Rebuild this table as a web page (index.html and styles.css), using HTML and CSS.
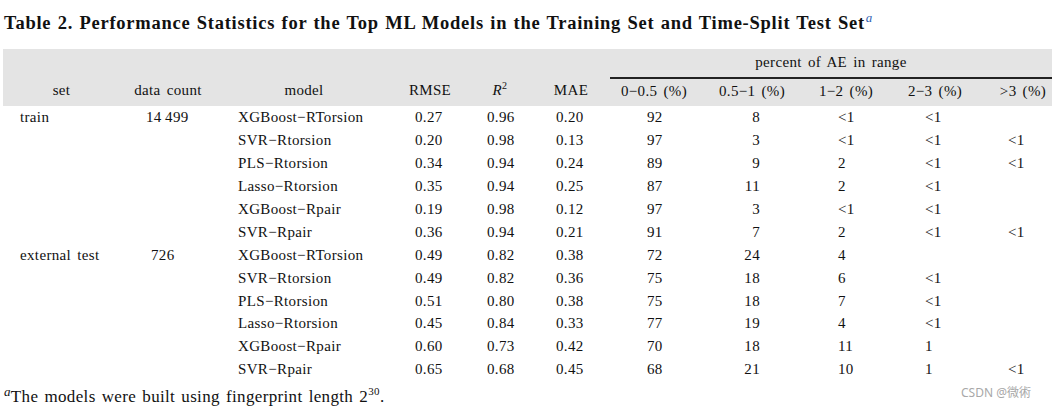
FILE: index.html
```html
<!DOCTYPE html>
<html>
<head>
<meta charset="utf-8">
<link rel="stylesheet" href="styles.css">
</head>
<body>
<div class="page">
  <h1 class="title">Table 2. Performance Statistics for the Top ML Models in the Training Set and Time-Split Test Set<sup class="fn-mark">a</sup></h1>
  <table class="stats">
    <colgroup>
      <col class="c-set"><col class="c-count"><col class="c-model"><col class="c-rmse"><col class="c-r2"><col class="c-mae"><col class="c-p1"><col class="c-p2"><col class="c-p3"><col class="c-p4"><col class="c-p5">
    </colgroup>
    <thead>
      <tr class="group-row">
        <th colspan="6"></th>
        <th colspan="5" class="group"><span>percent of AE in range</span></th>
      </tr>
      <tr class="head-row">
        <th>set</th><th>data count</th><th>model</th><th>RMSE</th><th><i>R</i><sup>2</sup></th><th>MAE</th>
        <th>0−0.5 (%)</th><th>0.5−1 (%)</th><th>1−2 (%)</th><th>2−3 (%)</th><th class="last">&gt;3 (%)</th>
      </tr>
    </thead>
    <tbody>
      <tr><td class="set">train</td><td class="count">14&#8201;499</td><td class="model">XGBoost−RTorsion</td><td class="rmse">0.27</td><td class="r2">0.96</td><td class="mae">0.20</td><td class="p1">92</td><td class="p2">8</td><td class="p3">&lt;1</td><td class="p4">&lt;1</td><td class="p5"></td></tr>
      <tr><td></td><td></td><td class="model">SVR−Rtorsion</td><td class="rmse">0.20</td><td class="r2">0.98</td><td class="mae">0.13</td><td class="p1">97</td><td class="p2">3</td><td class="p3">&lt;1</td><td class="p4">&lt;1</td><td class="p5">&lt;1</td></tr>
      <tr><td></td><td></td><td class="model">PLS−Rtorsion</td><td class="rmse">0.34</td><td class="r2">0.94</td><td class="mae">0.24</td><td class="p1">89</td><td class="p2">9</td><td class="p3">2</td><td class="p4">&lt;1</td><td class="p5">&lt;1</td></tr>
      <tr><td></td><td></td><td class="model">Lasso−Rtorsion</td><td class="rmse">0.35</td><td class="r2">0.94</td><td class="mae">0.25</td><td class="p1">87</td><td class="p2">11</td><td class="p3">2</td><td class="p4">&lt;1</td><td class="p5"></td></tr>
      <tr><td></td><td></td><td class="model">XGBoost−Rpair</td><td class="rmse">0.19</td><td class="r2">0.98</td><td class="mae">0.12</td><td class="p1">97</td><td class="p2">3</td><td class="p3">&lt;1</td><td class="p4">&lt;1</td><td class="p5"></td></tr>
      <tr><td></td><td></td><td class="model">SVR−Rpair</td><td class="rmse">0.36</td><td class="r2">0.94</td><td class="mae">0.21</td><td class="p1">91</td><td class="p2">7</td><td class="p3">2</td><td class="p4">&lt;1</td><td class="p5">&lt;1</td></tr>
      <tr><td class="set">external test</td><td class="count c2">726</td><td class="model">XGBoost−RTorsion</td><td class="rmse">0.49</td><td class="r2">0.82</td><td class="mae">0.38</td><td class="p1">72</td><td class="p2">24</td><td class="p3">4</td><td class="p4"></td><td class="p5"></td></tr>
      <tr><td></td><td></td><td class="model">SVR−Rtorsion</td><td class="rmse">0.49</td><td class="r2">0.82</td><td class="mae">0.36</td><td class="p1">75</td><td class="p2">18</td><td class="p3">6</td><td class="p4">&lt;1</td><td class="p5"></td></tr>
      <tr><td></td><td></td><td class="model">PLS−Rtorsion</td><td class="rmse">0.51</td><td class="r2">0.80</td><td class="mae">0.38</td><td class="p1">75</td><td class="p2">18</td><td class="p3">7</td><td class="p4">&lt;1</td><td class="p5"></td></tr>
      <tr><td></td><td></td><td class="model">Lasso−Rtorsion</td><td class="rmse">0.45</td><td class="r2">0.84</td><td class="mae">0.33</td><td class="p1">77</td><td class="p2">19</td><td class="p3">4</td><td class="p4">&lt;1</td><td class="p5"></td></tr>
      <tr><td></td><td></td><td class="model">XGBoost−Rpair</td><td class="rmse">0.60</td><td class="r2">0.73</td><td class="mae">0.42</td><td class="p1">70</td><td class="p2">18</td><td class="p3">11</td><td class="p4">1</td><td class="p5"></td></tr>
      <tr><td></td><td></td><td class="model">SVR−Rpair</td><td class="rmse">0.65</td><td class="r2">0.68</td><td class="mae">0.45</td><td class="p1">68</td><td class="p2">21</td><td class="p3">10</td><td class="p4">1</td><td class="p5">&lt;1</td></tr>
    </tbody>
  </table>
  <p class="footnote"><sup class="fn-a">a</sup>The models were built using fingerprint length 2<sup class="exp">30</sup>.</p>
  <div class="watermark">CSDN @微術</div>
</div>
</body>
</html>
```

FILE: styles.css
```css
html, body {
  margin: 0;
  padding: 0;
  background: #ffffff;
  overflow: hidden;
}

.page {
  position: relative;
  width: 1052px;
  height: 407px;
  font-family: "Liberation Serif", "Times New Roman", serif;
  color: #111111;
  padding-left: 3px;
  box-sizing: border-box;
}

.title {
  margin: 0;
  padding: 13px 0 0 1px;
  height: 36px;
  box-sizing: border-box;
  font-size: 18.5px;
  font-weight: bold;
  line-height: 20px;
  letter-spacing: 0.75px;
  word-spacing: 1px;
  white-space: nowrap;
}

.fn-mark {
  color: #2f5fb3;
  font-style: italic;
  font-weight: normal;
  font-size: 13px;
  line-height: 0;
  vertical-align: 7px;
  margin-left: 1px;
}

.stats {
  border-collapse: collapse;
  table-layout: fixed;
  width: 1049px;
  font-size: 15px;
  letter-spacing: 0.35px;
  word-spacing: 2px;
  margin-top: 13px;
}

.c-set { width: 117px; }
.c-count { width: 96px; }
.c-model { width: 176px; }
.c-rmse { width: 76px; }
.c-r2 { width: 64px; }
.c-mae { width: 78px; }
.c-p1 { width: 88px; }
.c-p2 { width: 108px; }
.c-p3 { width: 80px; }
.c-p4 { width: 98px; }
.c-p5 { width: 68px; }

thead tr { background: #e4e4e4; }

th {
  font-weight: normal;
  text-align: center;
  padding: 0;
  white-space: nowrap;
}

.group-row th {
  height: 28px;
  vertical-align: top;
}

.group {
  border-bottom: 2px solid #222222;
}

.group span {
  display: block;
  padding-top: 4px;
  line-height: 18px;
}

.head-row th {
  height: 23px;
  line-height: 18px;
  padding: 0 0 4px 0;
  vertical-align: middle;
}

.head-row th.last { padding-left: 10px; }

.head-row sup {
  font-size: 10px;
  line-height: 0;
  vertical-align: 6px;
}

td {
  height: 22.9px;
  padding: 0;
  line-height: 18px;
  white-space: nowrap;
  vertical-align: middle;
}

.set { padding-left: 17px; }
.count { padding-left: 26px; }
.count.c2 { padding-left: 31px; }
.model { padding-left: 22px; }
.rmse { padding-left: 23px; }
.r2 { padding-left: 19px; }
.mae { padding-left: 24px; }
.p1 { padding-left: 37px; }
.p2 { text-align: right; padding-right: 46px; }
.p3 { padding-left: 32px; }
.p4 { padding-left: 39px; }
.p5 { padding-left: 24px; }

.footnote {
  margin: 6px 0 0 1px;
  font-size: 17px;
  line-height: 20px;
  letter-spacing: 0.35px;
  word-spacing: 1.5px;
}

.fn-a {
  font-style: italic;
  font-size: 13px;
  line-height: 0;
  vertical-align: 6px;
}

.exp {
  font-size: 11px;
  line-height: 0;
  vertical-align: 7px;
}

.watermark {
  position: absolute;
  left: 961px;
  top: 385px;
  font-family: "Noto Sans", "Noto Sans CJK SC", sans-serif;
  font-size: 12px;
  color: #a8a8a8;
  line-height: 16px;
  white-space: nowrap;
}
```
